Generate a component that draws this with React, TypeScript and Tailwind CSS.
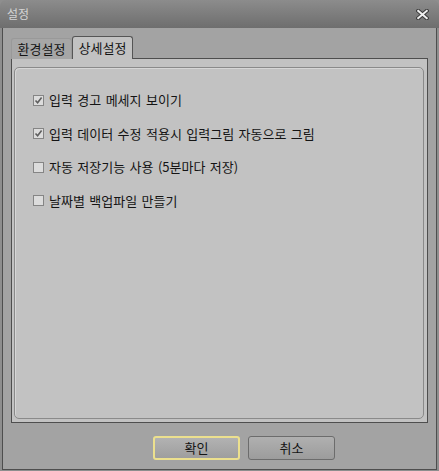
const FONT = { fontFamily: '"Noto Sans CJK KR", "Noto Sans", sans-serif' };

const OPTIONS: Array<{ label: string; checked: boolean }> = [
  { label: '입력 경고 메세지 보이기', checked: true },
  { label: '입력 데이터 수정 적용시 입력그림 자동으로 그림', checked: true },
  { label: '자동 저장기능 사용 (5분마다 저장)', checked: false },
  { label: '날짜별 백업파일 만들기', checked: false },
];

function CheckBox({ checked }: { checked: boolean }) {
  return (
    <span className="flex h-[11px] w-[11px] shrink-0 items-center justify-center border border-[#858585] bg-[#dcdcdc]">
      {checked && (
        <svg width="9" height="9" viewBox="0 0 9 9">
          <path d="M1.5 4.5 L3.6 6.8 L7.6 1.6" fill="none" stroke="#5e5e5e" strokeWidth="1.6" />
        </svg>
      )}
    </span>
  );
}

function CloseIcon() {
  return (
    <svg width="13" height="11" viewBox="0 0 13 11">
      <path d="M2.2 1.8 L10.8 9.2 M10.8 1.8 L2.2 9.2" stroke="#3a3a3a" strokeWidth="4" strokeLinecap="square" />
      <path d="M2.2 1.8 L10.8 9.2 M10.8 1.8 L2.2 9.2" stroke="#eeeeee" strokeWidth="2" strokeLinecap="square" />
    </svg>
  );
}

export default function App() {
  return (
    <div className="flex h-[471px] w-[439px] flex-col bg-[#8e8e8e] text-[13px] text-[#141414]" style={FONT}>
      <div className="flex h-[28px] shrink-0 items-center justify-between rounded-t-[6px] bg-gradient-to-b from-[#8c8c8c] to-[#6e6e6e] pl-[7px] pr-[10px]">
        <span className="text-[12px] text-[#d4d4d4]">설정</span>
        <CloseIcon />
      </div>

      <div className="mx-[2px] mb-[1px] flex flex-1 flex-col border border-t-0 border-[#4e4e4e] bg-[#a3a3a3] px-[8px] pb-[8px] pt-[8px]">
        <div className="relative z-10 -mb-px flex h-[23px] shrink-0 items-end">
          <div className="flex h-[21px] w-[61px] items-center justify-center rounded-t-[3px] border border-b-0 border-[#999999] bg-[#a6a6a6]">
            환경설정
          </div>
          <div className="flex h-[23px] w-[61px] items-center justify-center rounded-t-[3px] border border-b-0 border-[#555555] bg-[#c2c2c2]">
            상세설정
          </div>
        </div>

        <div className="flex h-[365px] shrink-0 flex-col border border-[#4e4e4e] bg-[#c2c2c2] pb-[3px] pl-[2px] pr-[3px] pt-[8px]">
          <div className="flex flex-1 flex-col gap-[13.5px] rounded-[5px] border border-[#8a8a8a] bg-[#c2c2c2] pl-[18px] pt-[22px] shadow-[inset_1px_1px_0_#d6d6d6]">
            {OPTIONS.map((option) => (
              <label key={option.label} className="flex h-[20px] items-center gap-[5px]">
                <CheckBox checked={option.checked} />
                <span className="leading-[20px] [word-spacing:1.5px]">{option.label}</span>
              </label>
            ))}
          </div>
        </div>

        <div className="mt-[13px] flex gap-[8px] pl-[142px]">
          <button
            type="button"
            className="flex h-[24px] w-[87px] items-center justify-center rounded-[3px] border-2 border-[#ece08e] bg-gradient-to-b from-[#b2b2b2] to-[#9e9e9e] text-[#141414]"
          >
            확인
          </button>
          <button
            type="button"
            className="flex h-[24px] w-[87px] items-center justify-center rounded-[3px] border border-[#6c6c6c] bg-gradient-to-b from-[#b0b0b0] to-[#9c9c9c] text-[#141414]"
          >
            취소
          </button>
        </div>
      </div>
    </div>
  );
}
